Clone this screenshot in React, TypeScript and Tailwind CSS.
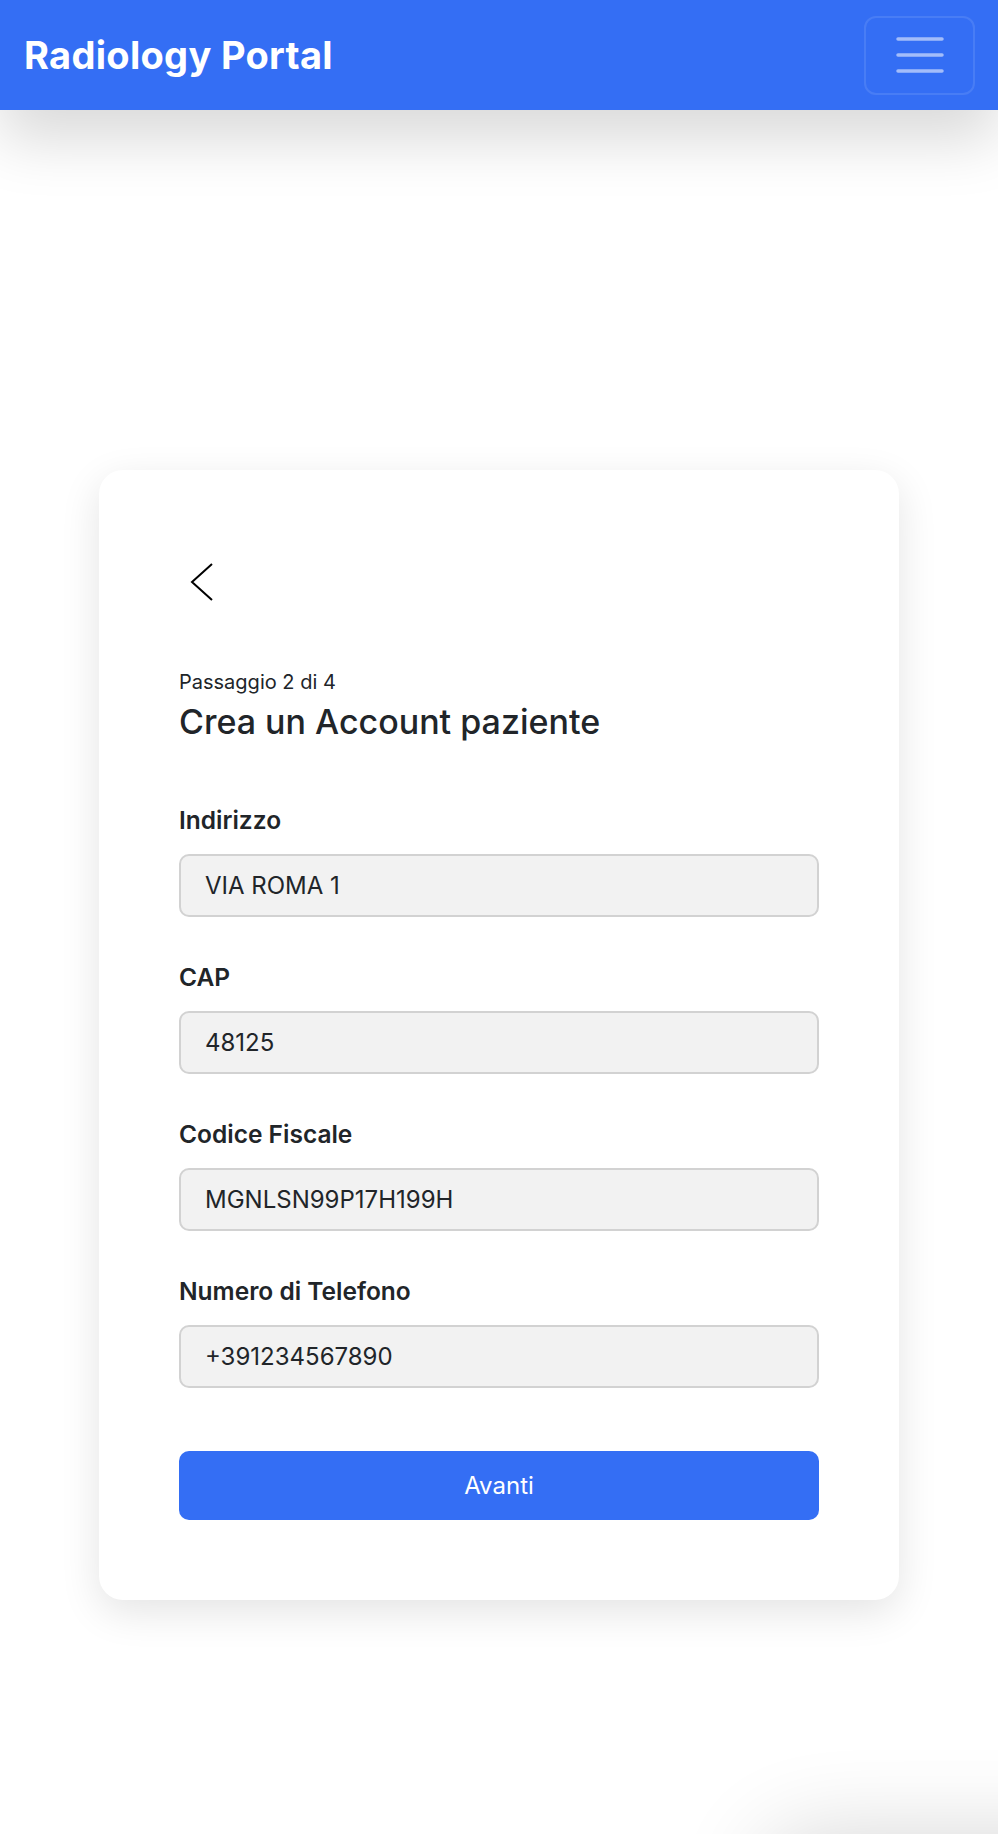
import React from 'react'

const fields = [
  { label: 'Indirizzo', value: 'VIA ROMA 1' },
  { label: 'CAP', value: '48125' },
  { label: 'Codice Fiscale', value: 'MGNLSN99P17H199H' },
  { label: 'Numero di Telefono', value: '+391234567890' },
]

export default function App() {
  return (
    <div className="min-h-[1834px] bg-white text-[#212529] overflow-hidden" style={{ fontFamily: 'Inter, "Noto Sans", sans-serif' }}>
      {/* Navbar */}
      <header className="relative z-10 h-[110px] bg-[#346ef4] flex items-center justify-between pl-6 pr-[23px] shadow-[0_30px_60px_rgba(0,0,0,0.15)]">
        <span className="text-white font-bold text-[38px] leading-[46px] tracking-[0.3px]">Radiology Portal</span>
        <button className="w-[111px] h-[79px] rounded-[12px] border-2 border-white/10 flex items-center justify-center">
          <svg width="48" height="36" viewBox="0 0 48 36" fill="none" stroke="rgba(255,255,255,0.55)" strokeWidth="3.5" strokeLinecap="round">
            <path d="M2 2h44M2 18h44M2 34h44" />
          </svg>
        </button>
      </header>

      {/* Card */}
      <main className="pt-[360px] pb-20">
        <div className="mx-auto w-[800px] bg-white rounded-[24px] shadow-[0_12px_40px_rgba(0,0,0,0.11)] px-20 pt-[92px] pb-[80px]">
          <button className="block ml-[3px] h-10 w-10">
            <svg width="40" height="40" viewBox="0 0 40 40" fill="none" stroke="#000" strokeWidth="2">
              <path d="M30 2 10 20 30 38" />
            </svg>
          </button>

          <p className="mt-[68px] text-[20px] leading-[24px]">Passaggio 2 di 4</p>
          <h2 className="mt-[6px] text-[34px] leading-[44px] font-medium">Crea un Account paziente</h2>

          <form className="mt-[60px] flex flex-col gap-[44px]">
            {fields.map(f => (
              <div key={f.label}>
                <label className="block text-[24.5px] leading-[32px] font-semibold">{f.label}</label>
                <input
                  readOnly
                  value={f.value}
                  className="mt-[18px] block w-full h-[63px] rounded-[10px] border-2 border-[#d2d2d2] bg-[#f2f2f2] px-6 text-[24px] text-[#212529] outline-none"
                />
              </div>
            ))}
          </form>

          <button className="mt-[63px] w-full h-[69px] rounded-[10px] bg-[#346ef4] text-white text-[24px]">Avanti</button>
        </div>
      </main>

      {/* floating widget just below the fold, only its shadow shows */}
      <div className="fixed left-[760px] bottom-[-110px] w-[440px] h-[110px] rounded-full bg-white shadow-[0_0_90px_rgba(0,0,0,0.16)]" />
    </div>
  )
}
